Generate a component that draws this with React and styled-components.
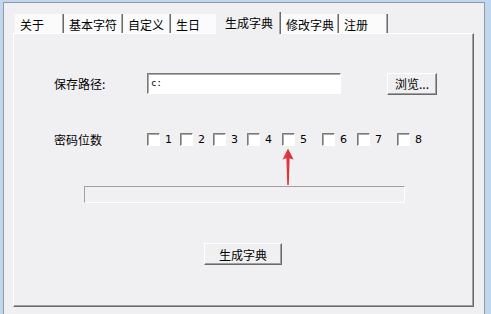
import React from 'react';
import styled, { createGlobalStyle } from 'styled-components';

const Global = createGlobalStyle`
  html,body{margin:0;padding:0;background:#c2d7ee;}
  body{font-family:"Noto Sans CJK SC","Liberation Sans",sans-serif;font-size:12px;color:#000;}
`;

const Frame = styled.div`height:314px;box-sizing:border-box;padding:2px 6px 0 3px;display:flex;overflow:hidden;`;
const Dialog = styled.div`flex:1;display:flex;flex-direction:column;background:#f0eff2;border:1px solid #8f9cab;border-bottom:none;padding:9px 10px 0 9px;`;
const TabStrip = styled.div`display:flex;align-items:flex-end;height:21px;padding-left:2px;`;
const Tab = styled.div`
  box-sizing:border-box;width:${p=>p.$w}px;height:${p=>p.$active?22:19}px;
  padding:2px 0 0 ${p=>p.$active?9:5}px;line-height:17px;white-space:nowrap;
  background:${p=>p.$active?'#f0eff2':'#fbfbfb'};
  border-right:1px solid #6c6c6c;box-shadow:inset -1px 0 #a9a9a9;
  ${p=>p.$active && 'position:relative;z-index:2;margin:0 0 -1px -2px;'}
`;
const Panel = styled.div`
  position:relative;z-index:1;box-sizing:border-box;height:274px;
  border-top:1px solid #fff;border-left:1px solid #fff;
  border-right:1px solid #696969;border-bottom:1px solid #696969;
  box-shadow:inset -1px -1px #a0a0a0;
  padding:39px 0 0 40px;display:flex;flex-direction:column;align-items:flex-start;
`;
const Row = styled.div`display:flex;align-items:center;height:${p=>p.$h}px;margin-top:${p=>p.$top||0}px;`;
const Label = styled.span`width:93px;white-space:nowrap;`;
const Field = styled.div`
  box-sizing:border-box;width:194px;height:21px;background:#fff;
  border-top:1px solid #7a7a7a;border-left:1px solid #7a7a7a;border-right:1px solid #fff;border-bottom:1px solid #fff;
  box-shadow:inset 1px 1px #a9a9a9;padding-left:3px;
  font-family:"DejaVu Sans Mono",monospace;font-size:9px;line-height:18px;
`;
const Button = styled.button`
  box-sizing:border-box;width:${p=>p.$w}px;height:${p=>p.$h}px;margin:0;margin-left:${p=>p.$ml||0}px;padding:0;
  background:#f0eff2;font-family:inherit;font-size:12px;color:#000;
  border-top:1px solid #fff;border-left:1px solid #fff;border-right:1px solid #6a6a6a;border-bottom:1px solid #6a6a6a;
  box-shadow:inset -1px -1px #a0a0a0;
`;
const Checks = styled.div`display:flex;align-items:center;`;
const CheckItem = styled.label`display:flex;align-items:center;gap:5px;width:${p=>p.$w}px;height:13px;`;
const Box = styled.span`
  box-sizing:border-box;width:13px;height:13px;background:#fff;flex:none;
  border-top:1px solid #7a7a7a;border-left:1px solid #7a7a7a;border-right:1px solid #fff;border-bottom:1px solid #fff;
  box-shadow:inset 1px 1px #a9a9a9;
`;
const Digit = styled.span`font-family:"DejaVu Sans","Liberation Sans",sans-serif;font-size:11px;line-height:13px;`;
const Progress = styled.div`
  box-sizing:border-box;width:321px;height:17px;margin:40px 0 0 30px;
  border-top:1px solid #a0a0a0;border-left:1px solid #a0a0a0;border-right:1px solid #fff;border-bottom:1px solid #fff;
`;
const Arrow = styled.svg`position:absolute;left:268px;top:114px;`;

const tabs = [
  { t: '关于', w: 49 },
  { t: '基本字符', w: 59 },
  { t: '自定义', w: 48 },
  { t: '生日', w: 47 },
  { t: '生成字典', w: 65, active: true },
  { t: '修改字典', w: 58 },
  { t: '注册', w: 49 },
];
const checks = [33, 33, 34, 35, 40, 35, 40, 30];

export default function App(){
  return (
    <>
      <Global/>
      <Frame>
        <Dialog>
          <TabStrip>
            {tabs.map(t => <Tab key={t.t} $w={t.w} $active={t.active}>{t.t}</Tab>)}
          </TabStrip>
          <Panel>
            <Row $h={21}>
              <Label>保存路径:</Label>
              <Field>c:</Field>
              <Button $w={50} $h={22} $ml={46}>浏览...</Button>
            </Row>
            <Row $h={13} $top={39}>
              <Label>密码位数</Label>
              <Checks>
                {checks.map((w,i) => (
                  <CheckItem key={i} $w={w}><Box/><Digit>{i+1}</Digit></CheckItem>
                ))}
              </Checks>
            </Row>
            <Progress/>
            <Row $h={22} $top={40}>
              <Button $w={78} $h={22} $ml={150}>生成字典</Button>
            </Row>
            <Arrow width="12" height="38" viewBox="0 0 12 38">
              <defs>
                <linearGradient id="ar" x1="0" x2="1">
                  <stop offset="0" stopColor="#f0474a"/>
                  <stop offset="1" stopColor="#c8262a"/>
                </linearGradient>
              </defs>
              <path d="M6 0.5 L11.5 11.5 L7.6 10.2 L6.8 37 L5.2 37 L4.4 10.2 L0.5 11.5 Z" fill="url(#ar)"/>
            </Arrow>
          </Panel>
        </Dialog>
      </Frame>
    </>
  );
}
